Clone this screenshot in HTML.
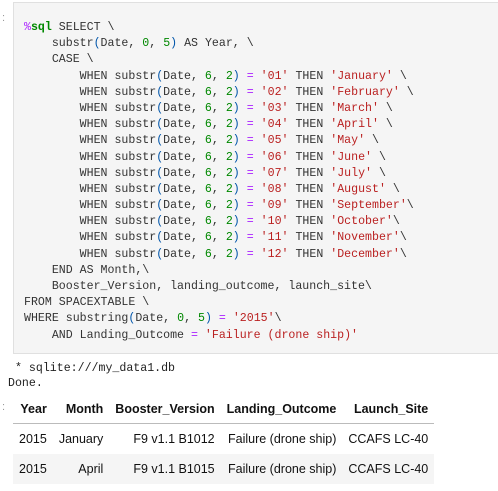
<!DOCTYPE html>
<html><head><style>
body{margin:0;width:498px;height:491px;background:#fff;overflow:hidden;position:relative;font-family:"Liberation Sans",sans-serif}
.code{position:absolute;left:13px;top:2px;width:490px;height:352px;background:#f5f5f5;border:1px solid #e0e0e0;box-sizing:border-box}
pre{margin:0;position:absolute;left:10px;top:17px;font-family:"Liberation Mono",monospace;font-size:11.6px;line-height:16.2px;color:#333}
pre div{height:16.2px}
.m{color:#a2f}.g{color:#080}.gb{color:#080;font-weight:bold}.s{color:#ba2121}.p{color:#0055aa}
.out{position:absolute;font-family:"Liberation Mono",monospace;font-size:11.6px;color:#222}
table{position:absolute;left:13px;top:395px;border-collapse:collapse;font-size:12.5px;color:#111}
th{font-weight:bold;height:28px;padding:0 6px;text-align:right;border-bottom:1px solid #bbb}
td{height:30px;padding:0 6px;text-align:right}
tr.a td{background:#f5f5f5}
.pr{position:absolute;left:2px;color:#999;font-size:11px}
</style></head><body>
<div class="pr" style="top:12px">:</div>
<div class="code"><pre><div><span class="m">%</span><span class="gb">sql</span> SELECT \</div><div>    substr<span class="p">(</span>Date, <span class="g">0</span>, <span class="g">5</span><span class="p">)</span> AS Year, \</div><div>    CASE \</div><div>        WHEN substr<span class="p">(</span>Date, <span class="g">6</span>, <span class="g">2</span><span class="p">)</span> <span class="m">=</span> <span class="s">'01'</span> THEN <span class="s">'January'</span> \</div><div>        WHEN substr<span class="p">(</span>Date, <span class="g">6</span>, <span class="g">2</span><span class="p">)</span> <span class="m">=</span> <span class="s">'02'</span> THEN <span class="s">'February'</span> \</div><div>        WHEN substr<span class="p">(</span>Date, <span class="g">6</span>, <span class="g">2</span><span class="p">)</span> <span class="m">=</span> <span class="s">'03'</span> THEN <span class="s">'March'</span> \</div><div>        WHEN substr<span class="p">(</span>Date, <span class="g">6</span>, <span class="g">2</span><span class="p">)</span> <span class="m">=</span> <span class="s">'04'</span> THEN <span class="s">'April'</span> \</div><div>        WHEN substr<span class="p">(</span>Date, <span class="g">6</span>, <span class="g">2</span><span class="p">)</span> <span class="m">=</span> <span class="s">'05'</span> THEN <span class="s">'May'</span> \</div><div>        WHEN substr<span class="p">(</span>Date, <span class="g">6</span>, <span class="g">2</span><span class="p">)</span> <span class="m">=</span> <span class="s">'06'</span> THEN <span class="s">'June'</span> \</div><div>        WHEN substr<span class="p">(</span>Date, <span class="g">6</span>, <span class="g">2</span><span class="p">)</span> <span class="m">=</span> <span class="s">'07'</span> THEN <span class="s">'July'</span> \</div><div>        WHEN substr<span class="p">(</span>Date, <span class="g">6</span>, <span class="g">2</span><span class="p">)</span> <span class="m">=</span> <span class="s">'08'</span> THEN <span class="s">'August'</span> \</div><div>        WHEN substr<span class="p">(</span>Date, <span class="g">6</span>, <span class="g">2</span><span class="p">)</span> <span class="m">=</span> <span class="s">'09'</span> THEN <span class="s">'September'</span>\</div><div>        WHEN substr<span class="p">(</span>Date, <span class="g">6</span>, <span class="g">2</span><span class="p">)</span> <span class="m">=</span> <span class="s">'10'</span> THEN <span class="s">'October'</span>\</div><div>        WHEN substr<span class="p">(</span>Date, <span class="g">6</span>, <span class="g">2</span><span class="p">)</span> <span class="m">=</span> <span class="s">'11'</span> THEN <span class="s">'November'</span>\</div><div>        WHEN substr<span class="p">(</span>Date, <span class="g">6</span>, <span class="g">2</span><span class="p">)</span> <span class="m">=</span> <span class="s">'12'</span> THEN <span class="s">'December'</span>\</div><div>    END AS Month,\</div><div>    Booster_Version, landing_outcome, launch_site\</div><div>FROM SPACEXTABLE \</div><div>WHERE substring<span class="p">(</span>Date, <span class="g">0</span>, <span class="g">5</span><span class="p">)</span> <span class="m">=</span> <span class="s">'2015'</span>\</div><div>    AND Landing_Outcome <span class="m">=</span> <span class="s">'Failure (drone ship)'</span></div></pre></div>
<div class="out" style="left:15px;top:362px">* sqlite:///my_data1.db</div>
<div class="out" style="left:8px;top:377px">Done.</div>
<div class="pr" style="top:401px">:</div>
<table>
<tr><th>Year</th><th>Month</th><th>Booster_Version</th><th>Landing_Outcome</th><th>Launch_Site</th></tr>
<tr><td>2015</td><td>January</td><td>F9 v1.1 B1012</td><td>Failure (drone ship)</td><td>CCAFS LC-40</td></tr>
<tr class="a"><td>2015</td><td>April</td><td>F9 v1.1 B1015</td><td>Failure (drone ship)</td><td>CCAFS LC-40</td></tr>
</table>
</body></html>
